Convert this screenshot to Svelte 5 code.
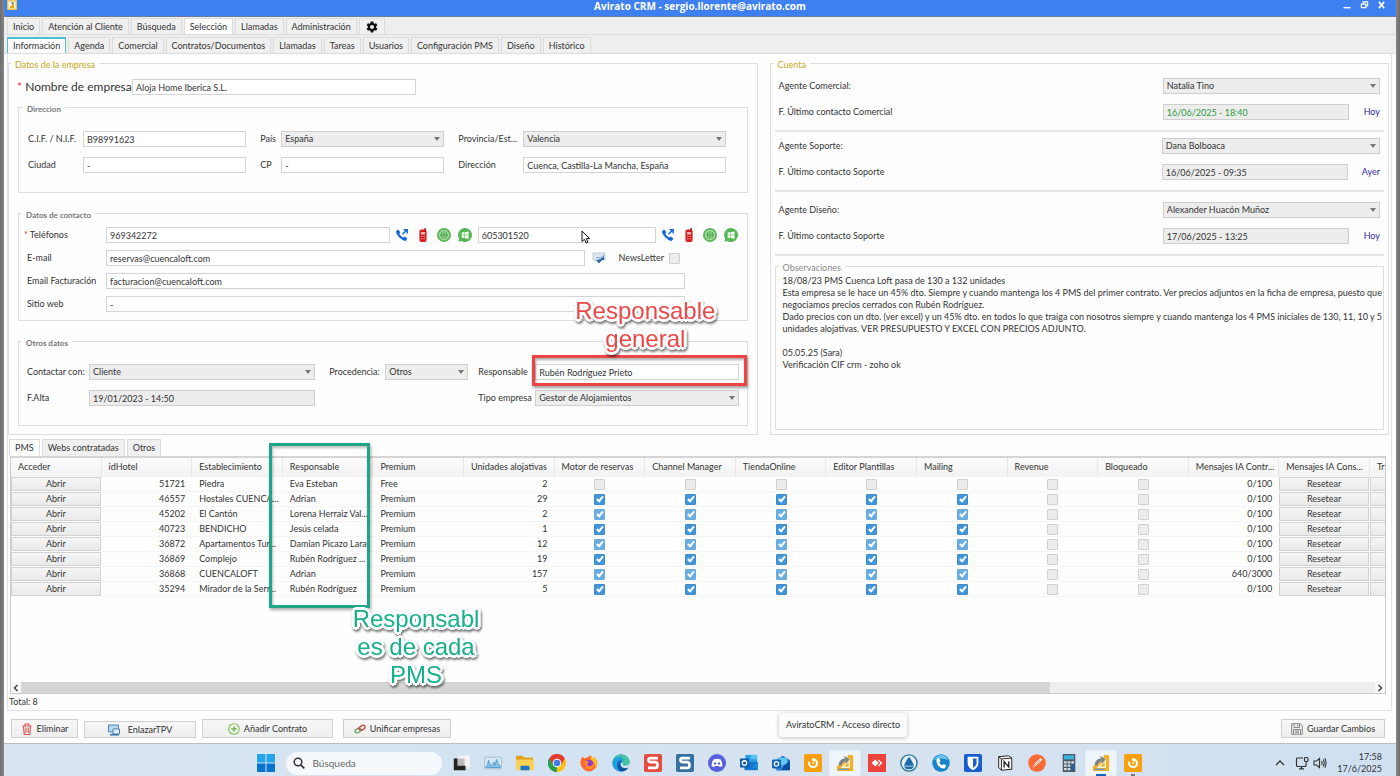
<script>
  const mainTabs = ['Inicio', 'Atención al Cliente', 'Búsqueda', 'Selección', 'Llamadas', 'Administración'];
  const subTabs = ['Información', 'Agenda', 'Comercial', 'Contratos/Documentos', 'Llamadas', 'Tareas', 'Usuarios', 'Configuración PMS', 'Diseño', 'Histórico'];
  const agents = [
    { id: 'com', label: 'Agente Comercial:', name: 'Natalia Tino', last: 'F. Último contacto Comercial', date: '16/06/2025 - 18:40', when: 'Hoy', recent: true },
    { id: 'sop', label: 'Agente Soporte:', name: 'Dana Bolboaca', last: 'F. Último contacto Soporte', date: '16/06/2025 - 09:35', when: 'Ayer' },
    { id: 'dis', label: 'Agente Diseño:', name: 'Alexander Huacón Muñoz', last: 'F. Último contacto Soporte', date: '17/06/2025 - 13:25', when: 'Hoy' }
  ];
  const notes = `18/08/23 PMS Cuenca Loft pasa de 130 a 132 unidades
Esta empresa se le hace un 45% dto. Siempre y cuando mantenga los 4 PMS del primer contrato. Ver precios adjuntos en la ficha de empresa, puesto que
negociamos precios cerrados con Rubén Rodríguez.
Dado precios con un dto. (ver excel) y un 45% dto. en todos lo que traiga con nosotros siempre y cuando mantenga los 4 PMS iniciales de 130, 11, 10 y 5
unidades alojativas. VER PRESUPUESTO Y EXCEL CON PRECIOS ADJUNTO.

05.05.25 (Sara)
Verificación CIF crm - zoho ok`;
  const columns = ['Acceder', 'idHotel', 'Establecimiento', 'Responsable', 'Premium', 'Unidades alojativas', 'Motor de reservas', 'Channel Manager', 'TiendaOnline', 'Editor Plantillas', 'Mailing', 'Revenue', 'Bloqueado', 'Mensajes IA Contr...', 'Mensajes IA Cons...', 'Tr'];
  const modules = ['Motor de reservas', 'Channel Manager', 'TiendaOnline', 'Editor Plantillas', 'Mailing', 'Revenue', 'Bloqueado'];
  const hotels = [
    { id: 51721, name: 'Piedra', owner: 'Eva Esteban', plan: 'Free', units: 2, msgs: '0/100', on: false },
    { id: 46557, name: 'Hostales CUENCA...', owner: 'Adrian', plan: 'Premium', units: 29, msgs: '0/100', on: true },
    { id: 45202, name: 'El Cantón', owner: 'Lorena Herraiz Val...', plan: 'Premium', units: 2, msgs: '0/100', on: true },
    { id: 40723, name: 'BENDICHO', owner: 'Jesús celada', plan: 'Premium', units: 1, msgs: '0/100', on: true },
    { id: 36872, name: 'Apartamentos Tur...', owner: 'Damian Picazo Lara', plan: 'Premium', units: 12, msgs: '0/100', on: true },
    { id: 36869, name: 'Complejo', owner: 'Rubén Rodríguez ...', plan: 'Premium', units: 19, msgs: '0/100', on: true },
    { id: 36868, name: 'CUENCALOFT', owner: 'Adrian', plan: 'Premium', units: 157, msgs: '640/3000', on: true },
    { id: 35294, name: 'Mirador de la Serr...', owner: 'Rubén Rodríguez', plan: 'Premium', units: 5, msgs: '0/100', on: true }
  ];
  const apps = ['desktops', 'monitor', 'folder', 'chrome', 'firefox', 'edge', 'snagit', 'snagitBlue', 'discord', 'outlook', 'outlookNew', 'orange', 'avirato', 'anydesk', 'sail', 'phone', 'bitwarden', 'notion', 'postman', 'calculator', 'avirato', 'orange'];
</script>

{#snippet combo(id, value)}
  <span class="combo">
    <select {id}><option>{value}</option></select>
  </span>
{/snippet}

{#snippet phoneButtons()}
  <span class="calls">
    <button aria-label="Llamar">
      <svg viewBox="0 0 14 14"><path d="M1 3.2 3.3 1.4 5.4 4.4 4.3 5.7Q5.6 8.2 8.2 9.6L9.6 8.4 12.4 10.6 10.8 12.8Q8.4 13.4 4.7 9.8 1 6 1 3.2Z" fill="#1567d8"/><path d="M7.4 6.3 11.6 2.2M8.6 1.7H12.2V5.4" fill="none" stroke="#1567d8" stroke-width="1.5"/></svg>
    </button>
    <button aria-label="Móvil">
      <svg viewBox="0 0 14 14"><rect x="3.4" y="1.6" width="7.2" height="12.4" rx="2" fill="#d81e1e"/><path d="M9.1 0V4" stroke="#a51414" stroke-width="1.4"/><rect x="5" y="4" width="4" height="2.6" fill="#f7b9b9"/><path d="M5.2 8.5H8.8M5.2 10.8H8.8" stroke="#f7b9b9" stroke-width="1.1" stroke-dasharray="1.2 1.200"/></svg>
    </button>
    <button aria-label="WhatsApp web">
      <svg viewBox="0 0 14 14"><circle cx="7" cy="7" r="7" fill="#5fb85d"/><circle cx="7" cy="7" r="4.6" fill="#8bd087" stroke="#d4efd2" stroke-width=".8"/><path d="M7 2.5V11.5M2.5 7H11.5M4.8 3.8Q3.6 7 4.8 10.2M9.2 3.8Q10.4 7 9.2 10.2" stroke="#4aa648" fill="none" stroke-width=".8"/></svg>
    </button>
    <button aria-label="WhatsApp escritorio">
      <svg viewBox="0 0 14 14"><path d="M7 0A7 7 0 1 1 3.4 13L.4 13.8 1.2 10.8A7 7 0 0 1 7 0Z" fill="#55b653"/><path d="M3.6 4.4 6.5 4V6.8H3.6ZM7 3.9 10.6 3.4V6.8H7ZM3.6 7.3H6.5V10.1L3.6 9.7ZM7 7.3H10.6V10.7L7 10.2Z" fill="#f1fbf0"/></svg>
    </button>
  </span>
{/snippet}

{#snippet appIcon(name)}
  <svg class="app" viewBox="0 0 20 20" aria-hidden="true">
    {#if name === 'desktops'}
      <path d="M7 2H20V15H7Z" fill="#f4f4f4"/><path d="M2 5H14V14H2Z" fill="#bcbcbc"/><path d="M2 5H6V13H15V18H2Z" fill="#222"/>
    {:else if name === 'monitor'}
      <rect x=".5" y="3.5" width="19" height="13" rx="1" fill="#d3e8f5" stroke="#a5b9c8"/><path d="M2 14 4 12 5 7 7 13 9 12 11 9 12 13 14 6 16 12 18 13V15H2Z" fill="#8fc4e6" stroke="#4f9bd0" stroke-width="1"/>
    {:else if name === 'folder'}
      <path d="M0 3Q0 2 1 2H7L9 4H18Q19 4 19 5V17H0Z" fill="#dda31f"/><path d="M0 6H20V17Q20 18 19 18H1Q0 18 0 17Z" fill="#fbd255"/><path d="M5 14Q5 13 6 13H14Q15 13 15 14V18H5Z" fill="#1c75c4"/>
    {:else if name === 'chrome'}
      <path d="M10 10 1.3 5A10 10 0 0 1 18.7 5Z" fill="#e33b2e"/><path d="M10 10 18.7 5A10 10 0 0 1 10 20Z" fill="#fbc116"/><path d="M10 10V20A10 10 0 0 1 1.3 5Z" fill="#2da04e"/><path d="M10 5H18.7L14.5 12.5ZM5.7 12.5 1.3 5 10 5Z" fill="#e33b2e"/><path d="M1.3 5 5.7 12.5 10 15V20A10 10 0 0 1 1.3 5" fill="#2da04e"/><circle cx="10" cy="10" r="4.8" fill="#fff"/><circle cx="10" cy="10" r="3.7" fill="#3c7de6"/>
    {:else if name === 'firefox'}
      <path d="M1 6 3 3 5 5Q7 4 8 4L12 1Q12 4 15 5L17 4Q22 12 16 17 10 22 4 17-1 12 1 6Z" fill="#ff6a2c"/><path d="M12 1Q12 4 15 5L17 4Q21 11 17 15 17 8 12 6Z" fill="#ffc42b"/><circle cx="10" cy="11" r="4.6" fill="#8b3fd1"/><path d="M5 8Q8 7 10 9 7 11 9 13 13 15 15 10 16 17 10 17 5 16 5 8Z" fill="#ff8a27"/>
    {:else if name === 'edge'}
      <circle cx="10" cy="10" r="9.6" fill="#1672c5"/><path d="M.5 10Q1 1 10 .5 19 1 19.6 9 19 13 14 13 11 13 12 10 12 6 8 6 2 6 .5 10Z" fill="#42c6a0"/><path d="M.5 10Q2 3 8 3 13 4 13 8 9 5 6 9 4 15 9 19 1 18 .5 10Z" fill="#1ea0df"/><path d="M9 10Q7 15 12 16 16 17 18 15 15 20 10 19 5 16 7 11Z" fill="#0d4f96"/><path d="M12 9Q11 13 14 13 19 13 19.6 9Q20 13 18 15 12 17 10 13 9 10 12 9Z" fill="#dce9f5"/>
    {:else if name === 'snagit' || name === 'snagitBlue'}
      <rect width="20" height="20" rx="2" fill={name === 'snagit' ? '#e64b40' : '#36719f'}/><path d="M15.500 4.500H7Q5 4.500 5 6.700 5 8.700 7 9H13Q15 9.500 15 12.200 15 15.500 13 15.500H4.500" fill="none" stroke="#fff" stroke-width="3"/>
    {:else if name === 'discord'}
      <circle cx="10" cy="10" r="10" fill="#5760de"/><path d="M6 6Q10 4.500 14 6 16 9 16 13.500L13 14.500 12.300 13.300H7.700L7 14.500 4 13.500Q4 9 6 6Z" fill="#fff"/><circle cx="7.800" cy="10.600" r="1.300" fill="#5760de"/><circle cx="12.200" cy="10.600" r="1.300" fill="#5760de"/>
    {:else if name === 'outlook'}
      <rect x="6" y="1" width="13" height="10" fill="#2a9be3"/><path d="M12 1H19V6H12Z" fill="#55c2f5"/><path d="M5 9H20V18H5Z" fill="#1275c9"/><path d="M5 9 12.500 14 20 9V18Z" fill="#1c88d8"/><rect y="5" width="10" height="10" rx="1" fill="#0a5aa8"/><circle cx="5" cy="10" r="2.500" fill="none" stroke="#fff" stroke-width="1.400"/>
    {:else if name === 'outlookNew'}
      <path d="M4 7 12 2 20 7V17Q20 18 19 18H5Z" fill="#1f6fcb"/><path d="M6 4H17V13H6Z" fill="#62c6f6"/><path d="M5 18 20 8V17Q20 18 19 18Z" fill="#0c4da0"/><path d="M5 9 13 14 9 18H5Z" fill="#2f92e2"/><rect y="6" width="10" height="10" rx="1.500" fill="#0f61b5"/><circle cx="5" cy="11" r="2.400" fill="none" stroke="#fff" stroke-width="1.400"/>
    {:else if name === 'orange'}
      <rect width="20" height="20" rx="2" fill="#f6a00f"/><path d="M6 8.500Q5 11.500 7 13.500 9.500 15.300 12.300 14 15 12.300 14.500 9.200 13.500 6 9 5.700" fill="none" stroke="#fff" stroke-width="2.200"/><path d="M9 5.500 11 8.500Q11 10.300 9 10.500" fill="none" stroke="#fff" stroke-width="1.200"/>
    {:else if name === 'avirato'}
      <path d="M1 19V14L13 3V1H19V19Z" fill="#f0b02a"/><path d="M5 15.500 15.500 5V15.500Z" fill="#fdf3d2"/><path d="M3 12Q4 5 10 5L9 2 15 6 11 11V8Q7 8 6 13Z" fill="#7b838c"/><path d="M11 12 14 9V14H9Z" fill="#f0b02a"/><path d="M3 17H14" stroke="#6d98bd" stroke-width="1.500"/>
    {:else if name === 'anydesk'}
      <rect width="20" height="20" fill="#ec4239"/><path d="M8 6 12 10 8 14 4 10ZM12 6 16 10 12 14 11 13 13.800 10 11 7Z" fill="#fff"/>
    {:else if name === 'sail'}
      <circle cx="10" cy="10" r="9" fill="#e4f1f7" stroke="#2f7897" stroke-width="1.600"/><path d="M10 3Q14 8 15.500 13H4.500Q6 8 10 3ZM4 14H16Q14 17 10 17T4 14Z" fill="#1d6ca5"/>
    {:else if name === 'phone'}
      <circle cx="10" cy="10" r="9.700" fill="#1784c9"/><path d="M2 7Q5 1 11 1 17 2 18 7 10 3 2 7Z" fill="#67c5ef"/><path d="M5 6 8 4.500 9.500 8 8 9.500Q9 12 11.500 12.500L13 11 16 13 14 16Q10 16.500 7 13 4.500 10 5 6Z" fill="#fff"/>
    {:else if name === 'bitwarden'}
      <rect width="20" height="20" rx="2" fill="#195dcf"/><path d="M4 3H16V10Q16 15 10 18 4 15 4 10Z" fill="#fff"/><path d="M10 5H14V10Q14 13 10 15.500Z" fill="#195dcf"/>
    {:else if name === 'notion'}
      <path d="M3 3 14 2 17.500 4.500V17L6 18 3 15Z" fill="#fff" stroke="#222" stroke-width="1.100"/><path d="M3 3 6 5.500 17.500 4.500M6 5.500V18" stroke="#222" stroke-width="1.100" fill="none"/><path d="M9 15V8.500L14.200 14.500V8" stroke="#222" stroke-width="1.500" fill="none"/>
    {:else if name === 'postman'}
      <circle cx="10" cy="10" r="9.800" fill="#fb6b37"/><path d="M5 15 8 10 14 4.500 16 6 10 12Z" fill="#fff"/><path d="M7 13 14 6" stroke="#fb6b37" stroke-width=".8"/>
    {:else}
      <path d="M3 0H17V20H3Z" fill="#4b5a67"/><path d="M4.500 1.500H15.500V6H4.500Z" fill="#3db3dc"/><path d="M4.500 8H7.500V10.500H4.500ZM8.500 8H11.500V10.500H8.500ZM12.500 8H15.500V10.500H12.500ZM4.500 11.700H7.500V14.200H4.500ZM8.500 11.700H11.500V14.200H8.500ZM4.500 15.500H7.500V18H4.500ZM8.500 15.500H11.500V18H8.500Z" fill="#d5dde3"/><path d="M12.500 11.700H15.500V18H12.500Z" fill="#1f62a5"/>
    {/if}
  </svg>
{/snippet}

<div class="desktop">
  <div class="window">
    <header class="titlebar">
      <svg class="logo" viewBox="0 0 20 20" aria-hidden="true"><rect width="20" height="20" rx="2" fill="#e7c65a"/><path d="M3 3H17V17H3Z" fill="#fff8df"/><path d="M4 16 14 6V16Z" fill="#e2a91e"/><path d="M8 3 15 6 10 10Z" fill="#7d8794"/></svg>
      <h1>Avirato CRM - sergio.llorente@avirato.com</h1>
      <div class="winctl">
        <button aria-label="Minimizar"><svg viewBox="0 0 9 9"><path d="M0 7.500H8" stroke="#fff" stroke-width="1.600"/></svg></button>
        <button aria-label="Restaurar"><svg viewBox="0 0 9 9"><path d="M3 3V1H8V5.500H6.500M1 3.500H6V7.500H1Z" fill="none" stroke="#fff" stroke-width="1.300"/></svg></button>
        <button aria-label="Cerrar"><svg viewBox="0 0 9 9"><path d="M1.500 1 7.500 8M7.500 1 1.500 8" stroke="#fff" stroke-width="1.800"/></svg></button>
      </div>
    </header>

    <nav class="tabs main">
      {#each mainTabs as tab}
        <button class:active={tab === 'Selección'}>{tab}</button>
      {/each}
      <button class="gear" aria-label="Ajustes">
        <svg viewBox="0 0 24 24"><path fill="#111" fill-rule="evenodd" d="M9.500 1h5l.6 3.200 2 1.200 3.100-1.100 2.500 4.300-2.500 2.200v2.400l2.500 2.200-2.500 4.300-3.100-1.100-2 1.200-.6 3.200h-5l-.6-3.200-2-1.200-3.100 1.100-2.500-4.300 2.500-2.200v-2.400L1.300 8.600l2.500-4.300 3.100 1.100 2-1.200ZM12 8a4 4 0 1 0 0 8 4 4 0 0 0 0-8Z"/></svg>
      </button>
    </nav>
    <nav class="tabs sub">
      {#each subTabs as tab, i}
        <button class:active={i === 0}>{tab}</button>
      {/each}
    </nav>

    <main>
      <div class="panels">
        <fieldset class="outer">
          <legend class="gold">Datos de la empresa</legend>
          <div class="row company">
            <label for="empresa"><i>*</i> Nombre de empresa:</label>
            <input id="empresa" value="Aloja Home Iberica S.L." />
          </div>

          <fieldset class="inner address">
            <legend>Direccion</legend>
            <label for="cif">C.I.F. / N.I.F.</label><input id="cif" value="B98991623" />
            <label class="mid" for="pais">País</label>{@render combo('pais', 'España')}
            <label class="mid" for="prov">Provincia/Est...</label>{@render combo('prov', 'Valencia')}
            <label for="ciudad">Ciudad</label><input id="ciudad" value="-" />
            <label class="mid" for="cp">CP</label><input id="cp" value="-" />
            <label class="mid" for="dir">Dirección</label><input id="dir" value="Cuenca, Castilla-La Mancha, España" />
          </fieldset>

          <fieldset class="inner contact">
            <legend>Datos de contacto</legend>
            <div class="row phones">
              <label for="tel"><i>*</i> Teléfonos</label>
              <input id="tel" class="tel1" value="969342272" />
              {@render phoneButtons()}
              <span class="tel2">
                <input aria-label="Segundo teléfono" value="605301520" />
                <svg class="cursor" viewBox="0 0 10 14" aria-hidden="true"><path d="M1 1V11.500L3.500 9.300 5.200 13 7 12.200 5.400 8.600H8.700Z" fill="#fff" stroke="#111"/></svg>
              </span>
              {@render phoneButtons()}
            </div>
            <div class="row mail">
              <label for="mail">E-mail</label>
              <input id="mail" value="reservas@cuencaloft.com" />
              <button class="send" aria-label="Enviar correo">
                <svg viewBox="0 0 14 12"><path d="M1 1H13V8H1Z" fill="#dce7ef" stroke="#b8c8d6" stroke-width=".8"/><path d="M12 4V8H10L7 11.500 4 8H6L10 6Z" fill="#2d67ac"/><path d="M4 6 9 5.500 12 3" stroke="#7ba7d8" fill="none"/></svg>
              </button>
              <label class="news" for="news">NewsLetter</label>
              <input id="news" type="checkbox" />
            </div>
            <div class="row wide">
              <label for="fact">Email Facturación</label><input id="fact" value="facturacion@cuencaloft.com" />
            </div>
            <div class="row wide">
              <label for="web">Sitio web</label><input id="web" value="-" />
            </div>
          </fieldset>

          <fieldset class="inner other">
            <legend>Otros datos</legend>
            <label for="con">Contactar con:</label>{@render combo('con', 'Cliente')}
            <label class="mid" for="proc">Procedencia:</label>{@render combo('proc', 'Otros')}
            <label class="far" for="resp">Responsable</label>
            <span class="marked">
              <input id="resp" value="Rubén Rodríguez Prieto" />
              <span class="redbox"></span>
              <strong class="callout red">Responsable general</strong>
            </span>
            <label for="alta">F.Alta</label><input id="alta" class="ro" readonly value="19/01/2023 - 14:50" />
            <label class="far tipo" for="tipo">Tipo empresa</label>{@render combo('tipo', 'Gestor de Alojamientos')}
          </fieldset>
        </fieldset>

        <fieldset class="outer account">
          <legend class="gold">Cuenta</legend>
          {#each agents as a}
            <div class="agent">
              <label for={a.id}>{a.label}</label>
              {@render combo(a.id, a.name)}
              <label for="{a.id}-f">{a.last}</label>
              <span class="last">
                <input id="{a.id}-f" class="ro" class:recent={a.recent} readonly value={a.date} />
                <output>{a.when}</output>
              </span>
            </div>
          {/each}
          <fieldset class="inner notes">
            <legend><label for="obs">Observaciones</label></legend>
            <textarea id="obs" value={notes}></textarea>
          </fieldset>
        </fieldset>
      </div>

      <nav class="tabs pms">
        <button class="active">PMS</button>
        <button>Webs contratadas</button>
        <button>Otros</button>
      </nav>
      <section class="grid">
        <div class="clip">
          <table>
            <thead>
              <tr>{#each columns as c}<th>{c}</th>{/each}</tr>
            </thead>
            <tbody>
              {#each hotels as h, r}
                <tr>
                  <td class="act"><button>Abrir</button></td>
                  <td class="num">{h.id}</td>
                  <td>{h.name}</td>
                  <td>{h.owner}</td>
                  <td>{h.plan}</td>
                  <td class="num">{h.units}</td>
                  {#each modules as m, i}
                    <td class="chk"><input type="checkbox" class:soft={r % 2 === 0} aria-label={m} checked={h.on && i < 5} /></td>
                  {/each}
                  <td class="num">{h.msgs}</td>
                  <td class="act"><button>Resetear</button></td>
                  <td class="act"><button aria-label="Traspasar"></button></td>
                </tr>
              {/each}
            </tbody>
          </table>
        </div>
        <div class="scroll">
          <button aria-label="Desplazar a la izquierda"><svg viewBox="0 0 8 8"><path d="M5.500 1 2.500 4 5.500 7" fill="none" stroke="#444" stroke-width="1.500"/></svg></button>
          <div class="track"><div class="thumb"></div></div>
          <button aria-label="Desplazar a la derecha"><svg viewBox="0 0 8 8"><path d="M2.500 1 5.500 4 2.500 7" fill="none" stroke="#444" stroke-width="1.500"/></svg></button>
        </div>
        <div class="greenbox"></div>
        <strong class="callout green">Responsables de cada PMS</strong>
      </section>
      <p class="total">Total: 8</p>
    </main>

    <footer>
      <button class="b1"><svg viewBox="0 0 12 12"><path d="M1.500 3H10.500M4 3V1H8V3M2.500 3.500 3.200 11.500H8.800L9.500 3.500M4.800 4.500V10M7.200 4.500V10" fill="none" stroke="#d9534f" stroke-width="1.100"/></svg>Eliminar</button>
      <button class="b2"><svg viewBox="0 0 12 12"><path d="M.5 1H10.500V8H.5Z" fill="#b5d9f0" stroke="#4a86b8"/><path d="M5 5H11.500V10H5Z" fill="#e3eef6" stroke="#4f80aa"/><path d="M2 10H11V11.500H2Z" fill="#2c6fae"/></svg>EnlazarTPV</button>
      <button class="b3"><svg viewBox="0 0 12 12"><circle cx="6" cy="6" r="5.300" fill="#f5fbf1" stroke="#7cc05c" stroke-width="1.100"/><path d="M6 3.200V8.800M3.200 6H8.800" stroke="#6ab54a" stroke-width="1.400"/></svg>Añadir Contrato</button>
      <button class="b4"><svg viewBox="0 0 12 12"><ellipse cx="4" cy="7.500" rx="3.200" ry="2" transform="rotate(-30 4 7.500)" fill="none" stroke="#5aa55c" stroke-width="1.400"/><ellipse cx="8" cy="4.800" rx="3.200" ry="2" transform="rotate(-30 8 4.800)" fill="none" stroke="#c94a45" stroke-width="1.400"/></svg>Unificar empresas</button>
      <button class="b5"><svg viewBox="0 0 12 12"><path d="M.7.7H9.500L11.300 2.500V11.300H.7Z" fill="#eee" stroke="#888"/><path d="M3 1V4.500H8.500V1M2.500 11V6.500H9.500V11M6.800 1.500V3.500M4 8H8M4 9.500H8" fill="none" stroke="#888"/></svg>Guardar Cambios</button>
      <div class="tip" role="tooltip">AviratoCRM - Acceso directo</div>
    </footer>
  </div>

  <div class="taskbar">
    <div class="dock">
      <button class="start" aria-label="Inicio"><svg viewBox="0 0 18 18"><path d="M0 0H8.500V8.500H0ZM9.500 0H18V8.500H9.500Z" fill="#22a5ea"/><path d="M0 9.500H8.500V18H0ZM9.500 9.500H18V18H9.500Z" fill="#0874cd"/></svg></button>
      <label class="search">
        <svg viewBox="0 0 12 12" aria-hidden="true"><circle cx="5" cy="5" r="3.800" fill="none" stroke="#333" stroke-width="1.500"/><path d="M7.800 7.800 11.300 11.300" stroke="#333" stroke-width="1.700"/></svg>
        <input type="search" placeholder="Búsqueda" aria-label="Búsqueda" />
      </label>
      {#each apps as name, i}
        <button class="appbtn" class:open={i === 12 || i === 20} class:current={i === 20} class:running={i === 21} aria-label={name}>{@render appIcon(name)}</button>
      {/each}
    </div>
    <div class="tray">
      <svg class="up" viewBox="0 0 10 10"><path d="M1 7 5 3 9 7" fill="none" stroke="#333" stroke-width="1.300"/></svg>
      <svg viewBox="0 0 14 14"><path d="M8 2H2.500Q1.500 2 1.500 3V9.500Q1.500 10.500 2.500 10.500H10Q11 10.500 11 9.500V7.500M4 12.800H9M6.500 10.500V12.800" fill="none" stroke="#333" stroke-width="1.200"/><rect x="9.500" y="1.500" width="3.500" height="4" rx="1" fill="none" stroke="#333" stroke-width="1.200"/><path d="M11.200 5.500V8" stroke="#333"/></svg>
      <svg viewBox="0 0 14 14"><path d="M1 5H3.500L6.500 2.500V11.500L3.500 9H1ZM8.500 5Q9.800 7 8.500 9M10.200 3.500Q12.300 7 10.200 10.500M11.800 2.300Q14.300 7 11.800 11.700" fill="none" stroke="#333" stroke-width="1.100"/></svg>
      <time>17:58<br />17/6/2025</time>
    </div>
  </div>
</div>

<style>
  :global(body) { margin: 0; background: #777; }
  .desktop {
    min-height: 100vh;
    box-sizing: border-box;
    padding: 0 4px;
    display: flex;
    flex-direction: column;
    overflow: hidden;
    background: linear-gradient(90deg, #6e6e6e, #858585 4px, #858585 calc(100% - 4px), #6e6e6e);
    font: 9px/12px Lato, "Noto Sans", sans-serif;
    color: #333;
  }
  button, input, select, textarea { font: inherit; color: inherit; margin: 0; box-sizing: border-box; min-width: 0; }
  button { padding: 0; border: 0; background: none; white-space: nowrap; }
  svg { display: block; flex: none; }
  .window { background: #fefefe; flex: 1; display: flex; flex-direction: column; border-bottom: 1px solid #b9bec6; box-sizing: border-box; }

  .titlebar { height: 16px; background: #3f80f0; border-bottom: 1px solid #6b7b99; display: grid; grid-template-columns: 1fr auto 1fr; }
  .logo { width: 10px; height: 10px; margin-left: 3px; }
  h1 { margin: 0; font: 700 10px/12px "Open Sans", sans-serif; color: #fff; }
  .winctl { display: flex; gap: 8px; justify-content: flex-end; padding-right: 10px; height: 9px; }
  .winctl svg { width: 9px; height: 8px; }

  .tabs { display: flex; gap: 2px; align-items: flex-end; background: #eee; }
  .tabs button { height: 16px; padding: 0 5px; border: 1px solid #dcdcdc; border-bottom: 0; background: #f0f0f0; }
  .tabs .active { background: #fff; }
  .main { height: 17px; padding: 0 3px; border-bottom: 1px solid #ddd; }
  .tabs .gear { width: 26px; }
  .gear svg { width: 12px; height: 12px; margin: auto; }
  .sub { height: 18px; padding: 0 3px; border-bottom: 1px solid #ddd; }
  .sub .active { border: 1px solid #4cc0cc; border-top-width: 2px; border-bottom: 0; }
  .pms { background: none; padding-top: 4px; margin-left: 1px; }
  .pms button { height: 17px; }

  main { border: solid #e2e2e2; border-width: 0 1px 1px; margin: 0 4px 0 3px; padding: 2px 2px 0 0; }
  .panels { display: grid; grid-template-columns: 749fr 619fr; gap: 12px; }
  fieldset { margin: 0; min-width: 0; box-sizing: border-box; border: 1px solid #dedede; }
  legend { padding: 4px 4px 0; line-height: 10px; color: #777; }
  .outer { padding: 9px 9px 8px; position: relative; }
  .outer > .gold { margin-left: -7px; color: #c9a620; }
  .inner > legend { margin-left: -5px; font-size: 8px; font-weight: 700; }
  input:not([type]), select, textarea { height: 16px; width: 100%; border: 1px solid #d4d4d4; border-radius: 0; padding: 0 3px; background: #fff; }
  .combo { position: relative; display: block; min-width: 0; }
  .combo::after { content: ""; position: absolute; right: 4px; top: 6px; border: 3px solid transparent; border-top: 4px solid #777; border-bottom: 0; pointer-events: none; }
  select { appearance: none; display: block; background: #ededed; border-color: #cfcfcf; }
  input.ro { background: #ededed; border-color: #cfcfcf; }
  label { white-space: nowrap; }
  i { color: #d43a3a; font-style: normal; }
  .row { display: grid; align-items: center; }
  .company { grid-template-columns: 109px 284px; gap: 6px; margin-left: -1px; }
  .company label { font-size: 12px; line-height: 16px; }

  .address { margin-top: 5px; padding: 17px 21px 19px 9px; display: grid; grid-template-columns: 55px 163fr 35px 163fr 79px 202fr; row-gap: 10px; align-items: center; }
  .mid { margin-left: 14px; }
  .far { margin-left: 10px; }
  .contact { margin-top: 13px; padding: 7px 9px 8px 8px; display: grid; row-gap: 7px; }
  .phones { grid-template-columns: 79px 284fr 88px 178fr 82px; }
  .phones label { margin-left: -3px; }
  .calls { display: flex; gap: 7px; padding-left: 5px; }
  .calls svg { width: 14px; height: 14px; }
  .tel2 { position: relative; display: block; }
  .cursor { position: absolute; right: 65px; top: 3px; width: 10px; height: 14px; }
  .mail { grid-template-columns: 79px 479fr 28px 56px 69px; }
  .send svg { width: 14px; height: 12px; margin: auto; }
  .news { margin-left: 6px; }
  .wide { grid-template-columns: 79px 579fr 53px; }
  .other { margin-top: 13px; padding: 16px 8px 19px; display: grid; grid-template-columns: 62px 226fr 70px 83fr 67px 203fr; row-gap: 10px; align-items: center; }
  .tipo { grid-column: 5; }
  .marked { position: relative; display: block; }
  .redbox { position: absolute; inset: -9px -8px -6px -3px; border: 3px solid #ee4444; box-shadow: 1px 2px 3px #0006, inset 1px 2px 3px #0005; pointer-events: none; }
  .callout {
    position: absolute; font: 24px/28px "Liberation Sans", Arial, sans-serif; text-align: center; pointer-events: none;
    text-shadow: -2px -2px 0 #fff, 2px -2px 0 #fff, -2px 2px 0 #fff, 2px 2px 0 #fff, 0 -3px 0 #fff, 0 3px 0 #fff, -3px 0 0 #fff, 3px 0 0 #fff;
    filter: drop-shadow(1px 2px 1px #0008);
  }
  .red { color: #ee4747; width: 150px; left: 35px; bottom: 27px; }

  .account { padding: 8px 4px 4px; display: flex; flex-direction: column; }
  .account > .gold { margin-left: -1px; }
  .agent { display: grid; grid-template-columns: 384fr 217fr; row-gap: 10px; align-items: center; padding: 0 4px 10px; border-bottom: 2px solid #e6e6e6; margin-bottom: 6px; }
  .agent:nth-of-type(2) { margin-bottom: 10px; }
  .last { display: flex; gap: 14px; justify-content: space-between; align-items: center; }
  .last input { width: 186px; flex: 0 1 186px; }
  .recent { color: #2c9a3c; }
  output { color: #3428a8; }
  .notes { flex: 1; padding: 2px 0 2px 3px; margin-top: -3px; display: flex; }
  .notes > legend { color: #888; margin-left: 0; font-size: 9px; font-weight: 400; }
  .notes textarea { border: 0; resize: none; height: auto; flex: 1; padding: 0 0 0 4px; line-height: 12px; display: block; background: transparent; overflow: hidden; white-space: pre; }

  .grid { position: relative; border: 1px solid #ccc; border-top: 2px solid #d5d5d5; margin: 0 3px 0 2px; height: 238px; box-sizing: border-box; display: flex; flex-direction: column; }
  .clip { flex: 1; overflow: hidden; }
  table { width: 105.5%; table-layout: fixed; border-collapse: separate; border-spacing: 0; }
  th { height: 19px; padding: 0 7px 2px; font-weight: 400; text-align: left; white-space: nowrap; overflow: hidden; background: linear-gradient(#fbfbfb, #f3f3f3); box-sizing: border-box; border-right: 1px solid #e8e8e8; }
  td { height: 15px; box-sizing: border-box; padding: 0 7px; white-space: nowrap; overflow: hidden; border-bottom: 1px solid #f5f5f5; line-height: 14px; }
  .num { text-align: right; }
  .act { padding: 0 1px 0 0; border: 0; vertical-align: top; }
  .act button { display: block; width: 100%; height: 14px; border: 1px solid #d2d2d2; background: linear-gradient(#f5f5f5, #eaeaea); line-height: 12px; }
  .chk { padding: 0 39px; }
  input[type="checkbox"] { appearance: none; display: block; width: 11px; height: 11px; border: 1px solid #d0d0d0; border-radius: 1px; background: #ececec; }
  .chk input { margin: 0 auto; }
  input[type="checkbox"]:checked { border-color: #3e8bc8; background: #4297dc; position: relative; }
  input[type="checkbox"].soft:checked { border-color: #6aa9da; background: #69afe4; }
  input[type="checkbox"]:checked::after { content: ""; position: absolute; left: 3px; top: 0; width: 2px; height: 5px; border: solid #fff; border-width: 0 2px 2px 0; transform: rotate(40deg); }
  .scroll { height: 11px; display: flex; background: #eee; }
  .scroll button { width: 10px; background: #f8f8f8; }
  .scroll svg { width: 8px; height: 8px; margin: auto; }
  .track { flex: 1; }
  .thumb { width: 76%; height: 100%; background: #d5d5d5; }
  .greenbox { position: absolute; left: 18.8%; width: 7.3%; top: -15px; height: 165px; box-sizing: border-box; border: 3px solid #1fa587; box-shadow: 1px 2px 3px #0005, inset 1px 2px 3px #0004; pointer-events: none; }
  .green { color: #16b08c; left: 24.6%; top: 147px; width: 134px; word-break: break-all; }
  .total { margin: 0; padding: 2px 0 2px 1px; }

  footer { position: relative; display: flex; align-items: flex-end; gap: 6px; padding: 8px 11px 5px 7px; }
  footer button { height: 19px; border: 1px solid #d0d0d0; background: linear-gradient(#f7f7f7, #eee); display: flex; align-items: center; justify-content: center; gap: 4px; }
  footer svg { width: 12px; height: 12px; }
  .b1 { width: 67px; }
  .b2 { width: 112px; height: 17px; gap: 8px; }
  .b3 { width: 131px; }
  .b4 { width: 108px; margin-left: 4px; }
  .b5 { width: 104px; margin-left: auto; }
  .tip { position: absolute; left: calc(50% + 79px); top: 2px; padding: 6px 7px; background: #fbfbfb; border-radius: 3px; box-shadow: 0 1px 4px #0004; white-space: nowrap; }

  .taskbar { height: 32px; display: flex; align-items: center; background: linear-gradient(90deg, #d9e4f0, #d3e3f3 40%, #d8e2ef 60%, #cfe0f2); position: relative; }
  .dock { display: flex; align-items: center; margin: 6px auto 0; }
  .start { width: 28px; }
  .start svg { width: 18px; height: 18px; margin: auto; }
  .search { width: 156px; height: 23px; margin: 0 3px 0 6px; border-radius: 12px; background: #f5f9fd; display: flex; align-items: center; gap: 8px; padding-left: 7px; box-sizing: border-box; }
  .search svg { width: 12px; height: 12px; }
  .search input { border: 0; background: none; padding: 0; width: 100px; font-size: 10px; outline: 0; }
  .search input::placeholder { color: #666; opacity: 1; }
  .appbtn { width: 32px; height: 26px; position: relative; }
  .app { width: 18px; height: 18px; margin: auto; }
  .open { background: #eef5fb; box-shadow: inset 0 0 0 1px #e6eff7; border-radius: 3px; }
  .current::after, .running::after { content: ""; position: absolute; left: 11px; right: 11px; bottom: 0; height: 2px; background: #1566b8; }
  .running::after { left: 14px; right: 14px; background: #777; }
  .tray { position: absolute; right: 14px; top: 7px; display: flex; align-items: center; gap: 4px; }
  .tray svg { width: 14px; height: 14px; }
  .tray .up { width: 10px; height: 10px; margin-right: 6px; }
  time { text-align: right; margin-left: 6px; }
</style>
